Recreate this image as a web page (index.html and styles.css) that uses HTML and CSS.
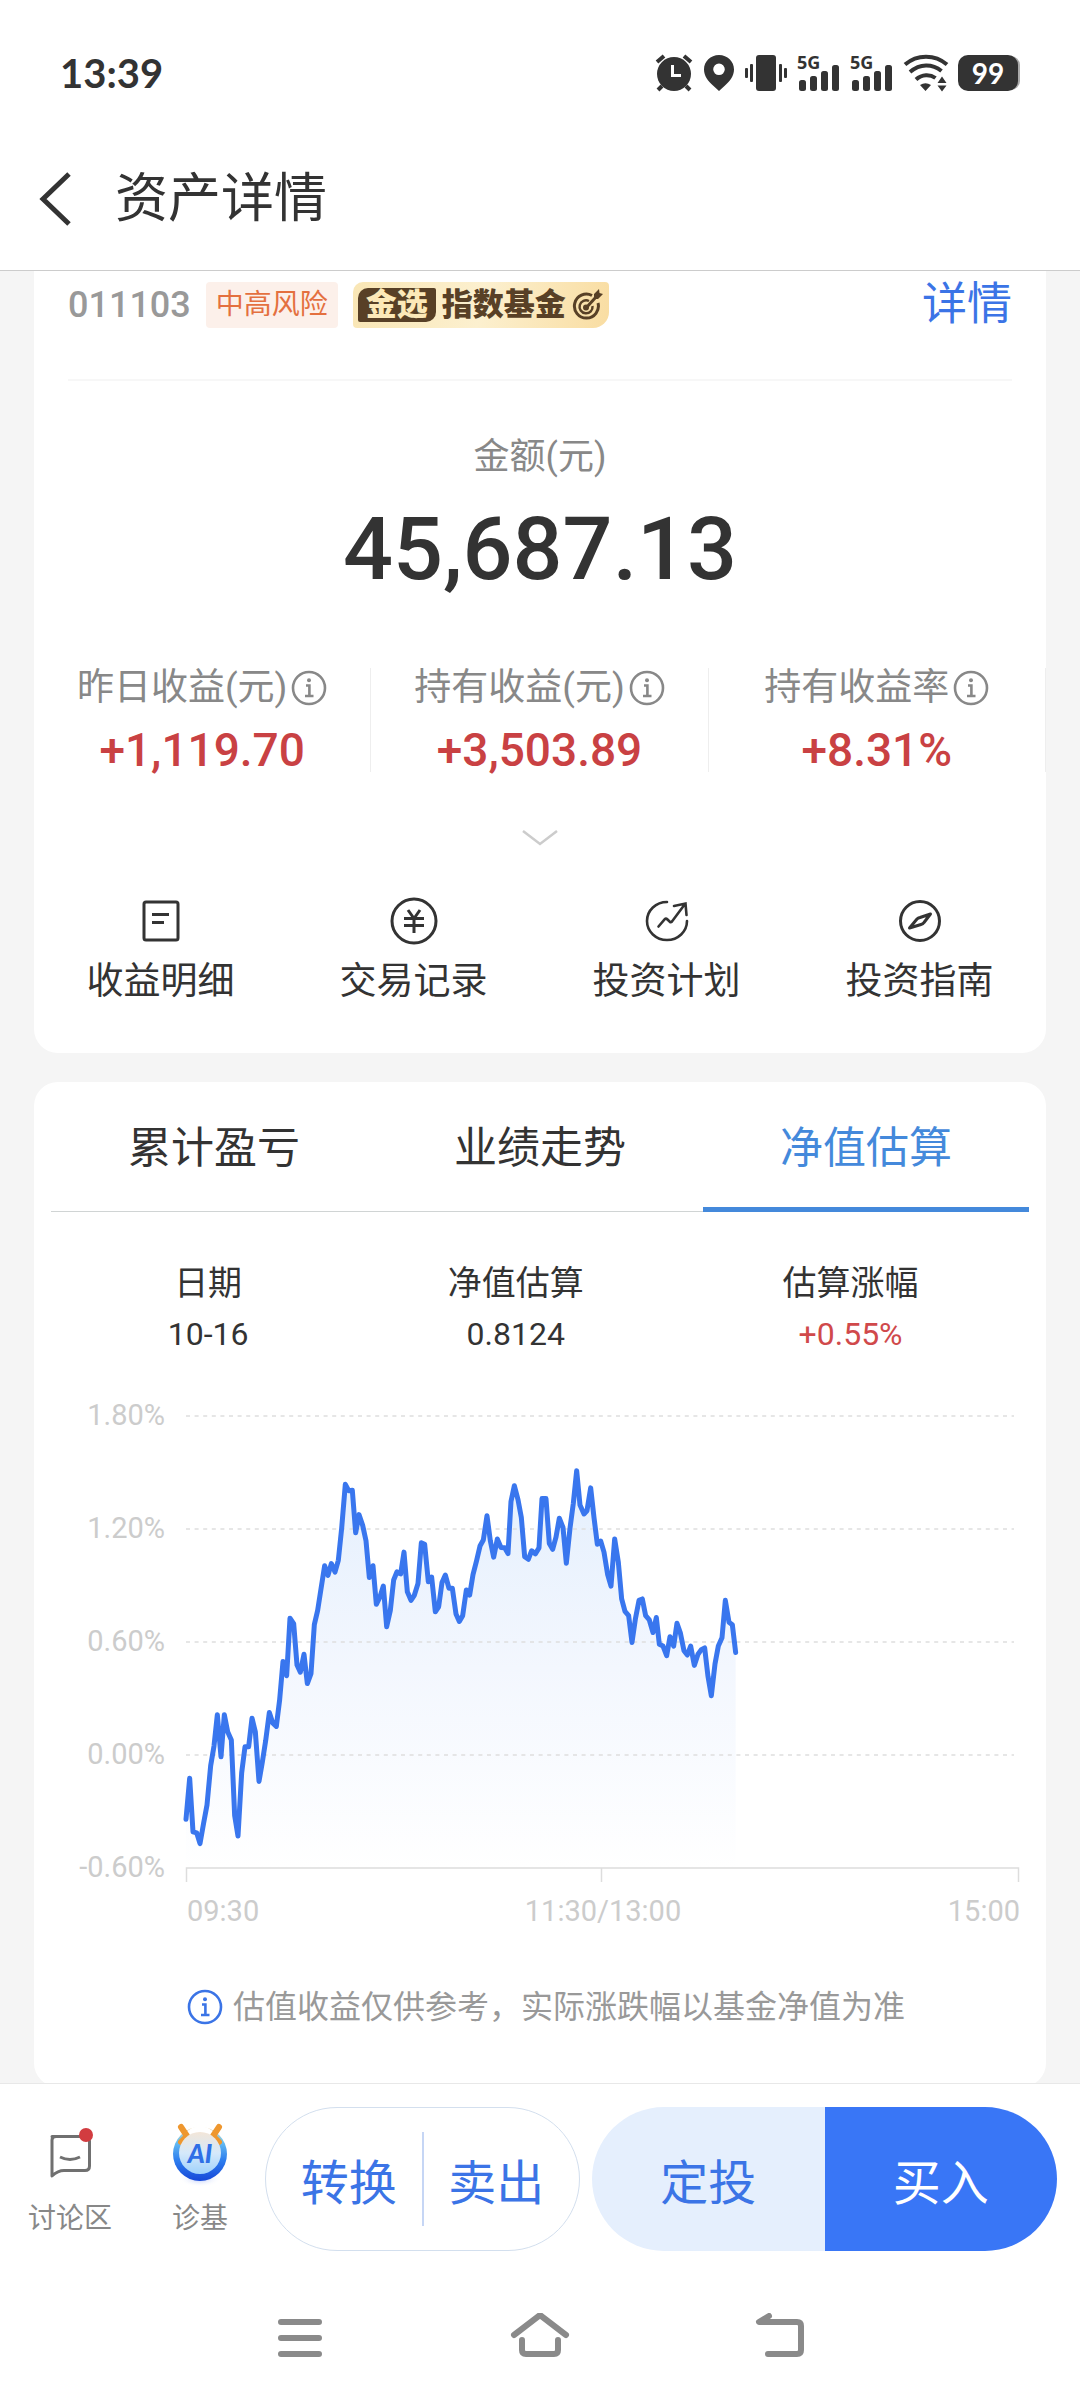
FILE: index.html
```html
<!DOCTYPE html>
<html lang="zh-CN">
<head>
<meta charset="utf-8">
<meta name="viewport" content="width=device-width, initial-scale=1">
<title>资产详情</title>
<link rel="stylesheet" href="styles.css">
</head>
<body>
<svg class="defs" aria-hidden="true">
  <symbol id="info" viewBox="0 0 36 36">
    <g fill="none" stroke="currentColor" stroke-width="2.6"><circle cx="18" cy="18" r="16"/><path d="M15 15.500H18.4V25.500M14 26H22.500"/></g>
    <circle cx="18" cy="10.300" r="2" fill="currentColor"/>
  </symbol>
</svg>

<div class="status">
  <time class="clock">13:39</time>
  <div class="status-icons">
    <svg width="40" height="38" viewBox="0 0 40 38"><g fill="none" stroke="currentColor" stroke-width="4"><path d="M3 8L10 2M37 8L30 2M8 32L4 36M32 32L36 36"/></g><circle cx="20" cy="20" r="17" fill="currentColor"/><path d="M18.500 11V21.500H27" fill="none" stroke="#fff" stroke-width="3"/></svg>
    <svg width="32" height="38" viewBox="0 0 32 38"><path fill="currentColor" fill-rule="evenodd" d="M16 1C7.500 1 1 7.500 1 15.500C1 22 5 27 10 31.500L16 37L22 31.500C27 27 31 22 31 15.500C31 7.500 24.500 1 16 1ZM16 9.500A5.800 5.800 0 1 1 16 21.100A5.800 5.800 0 1 1 16 9.500Z"/></svg>
    <svg width="44" height="38" viewBox="0 0 44 38"><g fill="currentColor"><rect x="12" y="1" width="20" height="36" rx="3"/><rect x="1" y="14" width="3" height="10" rx="1"/><rect x="6" y="10" width="3" height="18" rx="1"/><rect x="35" y="10" width="3" height="18" rx="1"/><rect x="40" y="14" width="3" height="10" rx="1"/></g></svg>
    <svg class="signal" width="44" height="38" viewBox="0 0 44 38"><g fill="currentColor"><rect x="2" y="26" width="7" height="11" rx="2.5"/><rect x="13" y="22" width="7" height="15" rx="2.5"/><rect x="24" y="17" width="7" height="20" rx="2.5"/><rect x="35" y="11" width="7" height="26" rx="2.5"/></g><text x="0" y="15" class="signal-text">5G</text></svg>
    <svg class="signal" width="44" height="38" viewBox="0 0 44 38"><g fill="currentColor"><rect x="2" y="26" width="7" height="11" rx="2.5"/><rect x="13" y="22" width="7" height="15" rx="2.5"/><rect x="24" y="17" width="7" height="20" rx="2.5"/><rect x="35" y="11" width="7" height="26" rx="2.5"/></g><text x="0" y="15" class="signal-text">5G</text></svg>
    <svg width="46" height="38" viewBox="0 0 46 38"><g fill="none" stroke="currentColor" stroke-width="4"><path d="M2 10.500C14 0 32 0 44 10.500M7 18C17 9.500 29 9.500 38.500 17M13 25.500C19 20 27 20 32.500 24"/></g><path fill="currentColor" d="M17 31Q22.500 27.500 28 31L22.500 37ZM34.500 29L39 22.500L43.500 29ZM34.500 31.500H43.500L39 37.500Z"/></svg>
    <span class="battery">99</span>
  </div>
</div>

<header class="header">
  <button class="back" aria-label="返回"><svg width="34" height="54" viewBox="0 0 34 54"><path d="M31 2L5 27L31 52" fill="none" stroke="currentColor" stroke-width="5"/></svg></button>
  <h1 class="title">资产详情</h1>
</header>

<main class="main">
  <section class="card summary">
    <div class="fund">
      <span class="code">011103</span>
      <span class="risk">中高风险</span>
      <span class="badge"><span class="badge-mark">金选</span><span>指数基金</span>
        <svg width="32" height="34" viewBox="0 0 32 34"><g fill="none" stroke="currentColor" stroke-width="3"><path d="M20 7.500A12 12 0 1 0 26 15"/><path d="M17 13A6.500 6.500 0 1 0 20.500 18" stroke-width="2.500"/><path d="M14 20L24 9"/></g><circle cx="14" cy="19.500" r="3" fill="currentColor"/><path d="M22 6L27 1L27.500 5L31 6L26 11L22 11Z" fill="currentColor"/></svg>
      </span>
      <a class="detail" href="#detail">详情</a>
    </div>
    <div class="amount-label">金额(元)</div>
    <div class="amount">45,687.13</div>
    <div class="stats">
      <div class="stat"><div class="stat-label">昨日收益(元)<svg width="36" height="36"><use href="#info"/></svg></div><div class="stat-value">+1,119.70</div></div>
      <div class="stat"><div class="stat-label">持有收益(元)<svg width="36" height="36"><use href="#info"/></svg></div><div class="stat-value">+3,503.89</div></div>
      <div class="stat"><div class="stat-label">持有收益率<svg width="36" height="36"><use href="#info"/></svg></div><div class="stat-value">+8.31%</div></div>
    </div>
    <button class="expand" aria-label="展开"><svg width="38" height="16" viewBox="0 0 38 16"><path d="M2 1L19 14L36 1" fill="none" stroke="currentColor" stroke-width="2.500"/></svg></button>
    <nav class="links">
      <a class="link" href="#income"><svg width="48" height="48" viewBox="0 0 48 48"><g fill="none" stroke="currentColor" stroke-width="3"><rect x="7" y="5" width="34" height="38" rx="2"/><path d="M15 17.500H32M15 25.500H27"/></g></svg>收益明细</a>
      <a class="link" href="#trades"><svg width="48" height="48" viewBox="0 0 48 48"><g fill="none" stroke="currentColor" stroke-width="3"><circle cx="24" cy="24" r="22"/><path d="M18 13L24 21.500L30 13M14 21.500H34M14 28.500H34M24 21.500V36"/></g></svg>交易记录</a>
      <a class="link" href="#plan"><svg width="48" height="48" viewBox="0 0 48 48"><g fill="none" stroke="currentColor" stroke-width="2.600" stroke-linecap="round"><path d="M24 5A20 19 0 1 0 44 24"/><path d="M15.500 29.500L22 22Q23 21 24.500 22.500L27 25Q28 25.500 29 24.500L42 7M31 9L42.500 6.500L43.500 18"/></g></svg>投资计划</a>
      <a class="link" href="#guide"><svg width="48" height="48" viewBox="0 0 48 48"><g fill="none" stroke="currentColor" stroke-width="3" stroke-linejoin="round"><circle cx="24" cy="24" r="19.500"/><path d="M13.500 31L21 22Q22 21 24 20.500L34.500 17L28 25.500Q27 27 25 27.500Z"/></g></svg>投资指南</a>
    </nav>
  </section>

  <section class="card trend">
    <div class="tabs" role="tablist">
      <button class="tab" role="tab" aria-selected="false">累计盈亏</button>
      <button class="tab" role="tab" aria-selected="false">业绩走势</button>
      <button class="tab active" role="tab" aria-selected="true">净值估算</button>
    </div>
    <table class="estimate">
      <thead><tr><th class="col-date">日期</th><th>净值估算</th><th>估算涨幅</th></tr></thead>
      <tbody><tr><td>10-16</td><td>0.8124</td><td class="up">+0.55%</td></tr></tbody>
    </table>
    <svg class="chart" viewBox="0 0 1012 550" role="img" aria-label="净值估算走势">
      <defs><linearGradient id="fill" gradientUnits="userSpaceOnUse" x1="0" y1="250" x2="0" y2="1366"><stop offset="0" stop-color="#e4effd"/><stop offset=".5" stop-color="#f3f7fe"/><stop offset="1" stop-color="#fff"/></linearGradient></defs>
      <g transform="translate(26 0) scale(.33333 .35714)">
        <path id="area" fill="url(#fill)"/>
      </g>
      <path class="grid" d="M152 36H980M152 149H980M152 262H980M152 375H980"/>
      <path class="axis" d="M152.500 502V488H984.500V502M567.500 488V502"/>
      <g transform="translate(26 0) scale(.33333 .35714)"><polyline id="line" class="line" points="378,1230 389,1115 399,1265 410,1268 420,1298 431,1240 441,1190 452,1080 462,1025 472,937 483,1055 493,937 503,985 514,1008 524,1220 534,1277 545,1100 555,1027 566,1027 576,947 586,985 597,1124 607,1070 617,1010 628,931 638,960 649,970 659,895 669,788 680,828 690,667 701,682 711,798 721,818 732,768 742,850 753,822 763,685 773,645 783,585 794,520 804,547 814,514 825,538 835,505 845,415 856,292 866,310 877,309 887,428 897,377 908,407 918,450 928,553 939,520 949,628 960,607 970,577 980,691 991,645 1001,560 1011,537 1022,543 1032,482 1042,593 1053,617 1063,603 1074,570 1084,456 1094,460 1105,565 1115,552 1126,649 1136,635 1146,567 1156,546 1167,583 1177,583 1188,655 1198,676 1208,660 1219,588 1229,602 1239,545 1250,505 1260,465 1270,448 1281,380 1291,450 1301,496 1312,445 1323,469 1334,470 1344,486 1353,340 1363,296 1374,335 1384,385 1394,495 1405,502 1415,478 1426,487 1437,470 1446,332 1458,332 1468,458 1478,474 1488,440 1498,387 1509,413 1519,513 1530,415 1540,345 1550,254 1560,350 1572,375 1581,366 1592,302 1602,385 1612,460 1622,451 1632,482 1643,545 1653,577 1664,445 1675,510 1685,613 1695,648 1706,660 1716,735 1726,670 1737,617 1747,613 1757,660 1768,672 1779,707 1789,665 1798,740 1809,745 1820,772 1830,719 1841,745 1851,681 1861,708 1872,758 1882,770 1892,745 1903,799 1914,768 1924,755 1934,750 1944,830 1954,884 1965,795 1975,745 1986,722 1996,617 2007,678 2017,685 2027,763"/></g>
      <g class="labels" text-anchor="end"><text x="131" y="45">1.80%</text><text x="131" y="158">1.20%</text><text x="131" y="271">0.60%</text><text x="131" y="384">0.00%</text><text x="131" y="497">-0.60%</text><text x="986" y="541">15:00</text></g>
      <g class="labels"><text x="153" y="541">09:30</text><text x="569" y="541" text-anchor="middle">11:30/13:00</text></g>
    </svg>
    <p class="notice"><svg width="36" height="36"><use href="#info"/></svg>估值收益仅供参考，实际涨跌幅以基金净值为准</p>
  </section>
</main>

<footer class="footer">
  <div class="actions">
    <a class="tool discuss" href="#discuss"><svg width="60" height="68" viewBox="0 0 60 68"><g fill="none" stroke="#707070" stroke-width="3" stroke-linejoin="round"><path d="M12 17.500H42Q49.500 17.500 49.500 22V47Q49.500 51.500 45 51.500H24Q18 51.500 12 57V21Q12 17.500 16 17.500Z"/><path d="M20 38Q30 43 40 38" stroke-width="3"/></g><circle cx="46" cy="16" r="7" fill="#d23c40"/></svg>讨论区</a>
    <a class="tool" href="#diagnose"><svg width="60" height="68" viewBox="0 0 60 68">
      <defs>
        <linearGradient id="ring" x1="0" y1="0" x2="0" y2="1"><stop offset="0" stop-color="#f3cf9c"/><stop offset=".25" stop-color="#6cc3f0"/><stop offset=".6" stop-color="#2f80ef"/><stop offset="1" stop-color="#1648d8"/></linearGradient>
        <linearGradient id="face" x1="0" y1="0" x2="0" y2="1"><stop offset="0" stop-color="#f3e6d8"/><stop offset=".5" stop-color="#d5e9fb"/><stop offset="1" stop-color="#9fd2fb"/></linearGradient>
        <radialGradient id="glow"><stop offset="0" stop-color="#b9c9fa"/><stop offset="1" stop-color="#fff" stop-opacity="0"/></radialGradient>
      </defs>
      <ellipse cx="30" cy="60" rx="21" ry="8" fill="url(#glow)"/>
      <circle cx="30" cy="35" r="27" fill="url(#ring)"/><path d="M15 14Q30 0 45 14L38 18H22Z" fill="#fff"/>
      <path d="M11 8L17 17L11 23M49 8L43 17L49 23" fill="none" stroke="#ee972f" stroke-width="6" stroke-linecap="round" stroke-linejoin="round"/>
      <circle cx="30" cy="34" r="21" fill="url(#face)"/>
      <text x="30" y="44" text-anchor="middle" class="ai">AI</text>
    </svg>诊基</a>
    <div class="pill outline"><button class="action">转换</button><button class="action">卖出</button></div>
    <div class="pill filled"><button class="action invest">定投</button><button class="action buy">买入</button></div>
  </div>
  <nav class="system">
    <button aria-label="最近任务"><svg width="60" height="52" viewBox="0 0 60 52"><path d="M11 9H49M11 25H49M11 41H49"/></svg></button>
    <button aria-label="主屏幕"><svg width="60" height="52" viewBox="0 0 60 52"><path d="M4 22L30 2L56 22M12 27V37Q12 41 16 41H44Q48 41 48 37V27"/></svg></button>
    <button aria-label="返回"><svg width="60" height="52" viewBox="0 0 60 52"><path d="M19 3L9 9H47Q51 9 51 13V37Q51 41 47 41H18"/></svg></button>
  </nav>
</footer>
<script src="chart.js"></script>
</body>
</html>
```
FILE: styles.css
```css
* { box-sizing: border-box; }
body {
  margin: 0;
  min-height: 100vh;
  display: flex;
  flex-direction: column;
  background: #f5f5f5;
  color: #333;
  font-family: Roboto, "Noto Sans CJK SC", sans-serif;
}
h1, p { margin: 0; font-weight: 400; }
svg { display: block; flex: none; }
a { color: inherit; text-decoration: none; }
button { margin: 0; padding: 0; border: 0; background: none; color: inherit; font: inherit; }
.defs { position: absolute; width: 0; height: 0; }

.status {
  display: flex;
  align-items: center;
  justify-content: space-between;
  height: 146px;
  padding: 0 62px 0 60px;
  background: #fff;
}
.clock { font: 700 40px/48px Lato, sans-serif; }
.status-icons { display: flex; align-items: center; gap: 9px; }
.signal { overflow: visible; }
.signal-text { font: 700 18px "Open Sans", sans-serif; fill: currentColor; }
.battery {
  width: 60px;
  border-radius: 10px;
  background: #333;
  box-shadow: 3px 0 0 -1px #aaa;
  color: #fff;
  font: 700 28px/36px Lato, sans-serif;
  text-align: center;
}

.header {
  display: flex;
  align-items: center;
  gap: 43px;
  height: 125px;
  padding: 0 38px 19px;
  border-bottom: 1px solid #ccc;
  background: #fff;
}
.title { font-size: 53px; line-height: 64px; }

.main { flex: 1; padding: 0 34px; }
.card { background: #fff; }
.summary { padding-top: 11px; padding-bottom: 48px; border-radius: 0 0 24px 24px; }
.fund {
  display: flex;
  align-items: center;
  margin: 0 34px;
  padding-bottom: 51px;
  border-bottom: 2px solid #f7f7f7;
  line-height: 46px;
}
.code { color: #999; font-size: 36px; font-weight: 500; }
.risk {
  margin-left: 15px;
  padding: 0 10px;
  border-radius: 4px;
  background: #fcf0ea;
  color: #e4703f;
  font-size: 28px;
}
.badge {
  display: flex;
  align-items: center;
  gap: 6px;
  height: 46px;
  margin-left: 15px;
  padding: 0 5px;
  border-radius: 10px 4px 16px 4px;
  background: linear-gradient(100deg, #f9e6b5, #fcf0cf 50%, #f9dda2);
  color: #584026;
  font-size: 31px;
  font-weight: 900;
}
.badge-mark {
  padding: 0 8px;
  border-radius: 10px 2px 10px 2px;
  background: #584026;
  color: #fce9b8;
  line-height: 34px;
}
.detail { margin-left: auto; color: #3b74e6; font-size: 45px; }
.amount-label { padding-top: 52px; color: #888; font-size: 36px; line-height: 48px; text-align: center; }
.amount { margin-top: 20px; font-size: 88px; font-weight: 500; line-height: 96px; text-align: center; }
.stats { display: grid; grid-template-columns: repeat(3, 1fr); margin-top: 71px; }
.stat { border-right: 1px solid #eee; text-align: center; }
.stat-label {
  display: flex;
  align-items: center;
  justify-content: center;
  gap: 4px;
  color: #888;
  font-size: 37px;
  line-height: 40px;
}
.stat-value { margin-top: 20px; color: #c94143; font-size: 46px; font-weight: 500; line-height: 44px; }
.expand { display: block; margin: 58px auto 51px; color: #ccc; }
.links { display: grid; grid-template-columns: repeat(4, 1fr); }
.link {
  display: flex;
  flex-direction: column;
  align-items: center;
  gap: 14px;
  font-size: 37px;
  line-height: 46px;
}

.trend { margin-top: 29px; margin-bottom: -4px; padding-bottom: 58px; border-radius: 24px; }
.tabs { display: flex; margin: 0 17px; box-shadow: inset 0 -1px #d0d4d4; }
.tab { flex: 1; height: 130px; border-bottom: 5px solid transparent; padding-bottom: 2px; font-size: 43px; }
.tab.active { border-color: #4489db; color: #4489db; }
.estimate {
  width: calc(100% - 62px);
  margin: 49px 28px 24px 34px;
  border-collapse: collapse;
  table-layout: fixed;
  text-align: center;
}
.estimate th { padding: 0 0 7px; font-size: 34px; font-weight: 400; line-height: 44px; }
.estimate td { padding: 0; font-size: 32px; line-height: 44px; }
.estimate .col-date { width: 29.5%; }
.estimate .up { color: #d0494b; }
.chart { width: 100%; }
.grid { fill: none; stroke: #dedede; stroke-width: 1.5; stroke-dasharray: 4 4.6; }
.axis { fill: none; stroke: #ddd; stroke-width: 1.5; }
.line {
  fill: none;
  stroke: #3976ee;
  stroke-width: 5;
  stroke-linejoin: round;
  stroke-linecap: round;
  vector-effect: non-scaling-stroke;
}
.labels { fill: #ccc; font-size: 29px; }
.notice {
  display: flex;
  align-items: center;
  justify-content: center;
  gap: 10px;
  margin-top: 55px;
  padding-left: 12px;
  color: #999;
  font-size: 32px;
  line-height: 44px;
}
.notice svg { color: #3b74e6; }

.footer { position: relative; border-top: 1px solid #e8e8e8; background: #fff; }
.actions { display: flex; padding: 23px 23px 34px 0; }
.tool {
  display: flex;
  flex-direction: column;
  align-items: center;
  width: 120px;
  padding-top: 12px;
  color: #888;
  font-size: 28px;
  line-height: 64px;
}
.tool.discuss { width: 140px; }
.ai { fill: #2f6fe6; font: italic 900 26px Lato, sans-serif; }
.pill { display: flex; height: 144px; border-radius: 72px; overflow: hidden; }
.outline { width: 315px; margin-left: 5px; padding: 24px 10px; border: 1px solid #d3dfee; }
.filled { flex: 1; margin-left: 12px; }
.action { flex: 1; color: #3b74e6; font-size: 48px; }
.outline .action + .action { border-left: 2px solid #c6d6f5; }
.invest { background: #e5effd; }
.buy { background: #3976f6; color: #fff; }
.system { display: flex; justify-content: center; gap: 180px; padding: 28px 0 35px; }
.system svg { fill: none; stroke: #8a8a8a; stroke-width: 6; stroke-linecap: round; stroke-linejoin: round; }
```
FILE: chart.js
```js
// Close the value line down to the axis to shade the area under it.
const points = document.getElementById('line').getAttribute('points');
document.getElementById('area').setAttribute('d', `M378,1366 L${points} L2027,1366 Z`);
```
